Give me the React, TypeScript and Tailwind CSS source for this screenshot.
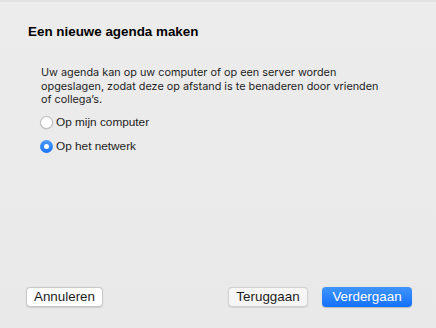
import React from "react";

function Radio({ checked, label }: { checked?: boolean; label: string }) {
  return (
    <label className="flex items-center gap-[3px]">
      {checked ? (
        <span className="flex h-[13px] w-[13px] items-center justify-center rounded-full bg-gradient-to-b from-[#4a9bfd] to-[#1a73f5]">
          <span className="h-[5px] w-[5px] rounded-full bg-white" />
        </span>
      ) : (
        <span className="h-[13px] w-[13px] rounded-full border border-[#b9b9b9] bg-white shadow-[0_0.5px_1px_rgba(0,0,0,0.15)]" />
      )}
      <span>{label}</span>
    </label>
  );
}

export default function App() {
  return (
    <div
      className="flex h-[328px] w-[436px] flex-col border-t-2 border-[#e2e2e2] bg-gradient-to-b from-[#ececec] to-[#e9e9e9] text-[#1d1d1d]"
      style={{ fontFamily: '"Liberation Sans", Arial, sans-serif' }}
    >
      <h1 className="ml-[28px] mt-[22px] text-[13.4px] font-bold leading-[16px] text-black">
        Een nieuwe agenda maken
      </h1>
      <p
        className="ml-[41px] mt-[26px] text-[10.85px] leading-[13.5px]"
        style={{ fontFamily: "Inter, sans-serif" }}
      >
        Uw agenda kan op uw computer of op een server worden
        <br />
        opgeslagen, zodat deze op afstand is te benaderen door vrienden
        <br />
        of collega’s.
      </p>
      <div className="ml-[40px] mt-[9px] flex flex-col gap-[11px] text-[11.8px] leading-[13px]">
        <Radio label="Op mijn computer" />
        <Radio checked label="Op het netwerk" />
      </div>
      <div className="mt-auto mb-[21px] flex items-center px-[26px] pr-[24px] text-[13.4px]">
        <button className="h-[20px] w-[77px] rounded-[4px] border border-[#c8c8c8] bg-white leading-[18px] shadow-[0_0.5px_1px_rgba(0,0,0,0.12)]">
          Annuleren
        </button>
        <div className="ml-auto flex gap-[14px]">
          <button className="h-[20px] w-[80px] rounded-[4px] border border-[#d0d0d0] bg-[#f6f6f6] leading-[18px] shadow-[0_0.5px_1px_rgba(0,0,0,0.1)]">
            Teruggaan
          </button>
          <button className="h-[20px] w-[90px] rounded-[4px] bg-gradient-to-b from-[#3f95fc] to-[#1270fb] leading-[20px] text-white shadow-[0_0.5px_1px_rgba(0,0,0,0.2)]">
            Verdergaan
          </button>
        </div>
      </div>
    </div>
  );
}
